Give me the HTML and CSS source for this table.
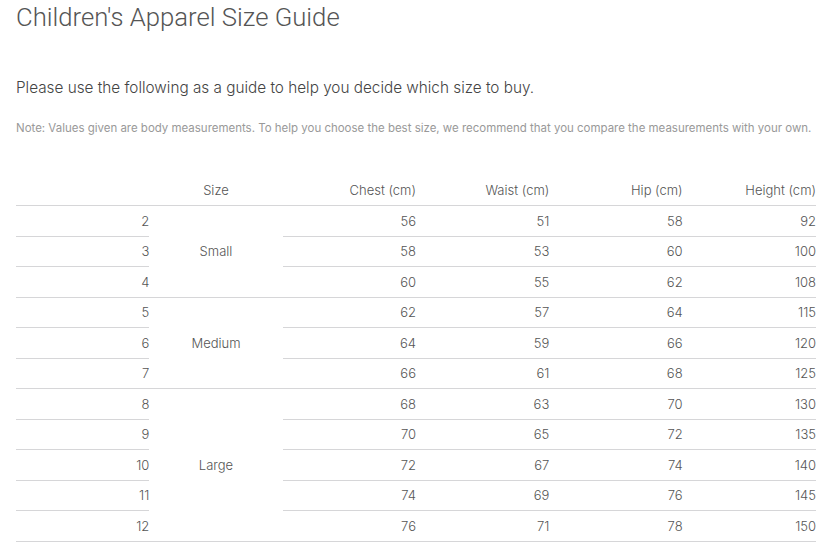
FILE: index.html
```html
<!DOCTYPE html>
<html lang="en">
<head>
<meta charset="utf-8">
<title>Children's Apparel Size Guide</title>
<link rel="stylesheet" href="styles.css">
</head>
<body>
<main class="guide">
  <h1 class="guide-title">Children's Apparel Size Guide</h1>
  <p class="guide-intro">Please use the following as a guide to help you decide which size to buy.</p>
  <p class="guide-note">Note: Values given are body measurements. To help you choose the best size, we recommend that you compare the measurements with your own.</p>
  <table class="size-table">
    <thead>
      <tr>
        <th class="num"></th>
        <th class="size">Size</th>
        <th class="num">Chest (cm)</th>
        <th class="num">Waist (cm)</th>
        <th class="num">Hip (cm)</th>
        <th class="num">Height (cm)</th>
      </tr>
    </thead>
    <tbody>
      <tr><td class="num">2</td><td class="size" rowspan="3">Small</td><td class="num">56</td><td class="num">51</td><td class="num">58</td><td class="num">92</td></tr>
      <tr><td class="num">3</td><td class="num">58</td><td class="num">53</td><td class="num">60</td><td class="num">100</td></tr>
      <tr><td class="num">4</td><td class="num">60</td><td class="num">55</td><td class="num">62</td><td class="num">108</td></tr>
      <tr><td class="num">5</td><td class="size" rowspan="3">Medium</td><td class="num">62</td><td class="num">57</td><td class="num">64</td><td class="num">115</td></tr>
      <tr><td class="num">6</td><td class="num">64</td><td class="num">59</td><td class="num">66</td><td class="num">120</td></tr>
      <tr><td class="num">7</td><td class="num">66</td><td class="num">61</td><td class="num">68</td><td class="num">125</td></tr>
      <tr><td class="num">8</td><td class="size" rowspan="5">Large</td><td class="num">68</td><td class="num">63</td><td class="num">70</td><td class="num">130</td></tr>
      <tr><td class="num">9</td><td class="num">70</td><td class="num">65</td><td class="num">72</td><td class="num">135</td></tr>
      <tr><td class="num">10</td><td class="num">72</td><td class="num">67</td><td class="num">74</td><td class="num">140</td></tr>
      <tr><td class="num">11</td><td class="num">74</td><td class="num">69</td><td class="num">76</td><td class="num">145</td></tr>
      <tr><td class="num">12</td><td class="num">76</td><td class="num">71</td><td class="num">78</td><td class="num">150</td></tr>
    </tbody>
  </table>
</main>
</body>
</html>
```

FILE: styles.css
```css
html, body {
  margin: 0;
  padding: 0;
  background: #ffffff;
}

body {
  font-family: "Inter", "Roboto", "Liberation Sans", sans-serif;
  color: #555;
}

.guide {
  padding: 0 16px;
}

.guide-title {
  margin: 0;
  padding-top: 1px;
  font-family: "Roboto", "Inter", sans-serif;
  font-size: 25.7px;
  line-height: 32px;
  font-weight: 300;
  color: #555;
}

.guide-intro {
  margin: 44px 0 0;
  font-size: 15.3px;
  line-height: 22px;
  font-weight: 300;
  color: #444;
}

.guide-note {
  margin: 21px 0 0;
  font-size: 11.47px;
  line-height: 16px;
  font-weight: 400;
  color: #999;
}

.size-table {
  margin-top: 39px;
  width: 800px;
  border-collapse: collapse;
  table-layout: fixed;
  font-size: 13px;
  color: #555;
}

.size-table th,
.size-table td {
  padding: 0;
  font-weight: 300;
}

.size-table th {
  height: 30px;
  border-bottom: 1px solid #d6d6d8;
  vertical-align: middle;
}

.size-table td {
  height: 29.5px;
  border-bottom: 1px solid #d6d6d8;
  vertical-align: middle;
}

.size-table .num {
  text-align: right;
}

.size-table .size {
  text-align: center;
}
```
